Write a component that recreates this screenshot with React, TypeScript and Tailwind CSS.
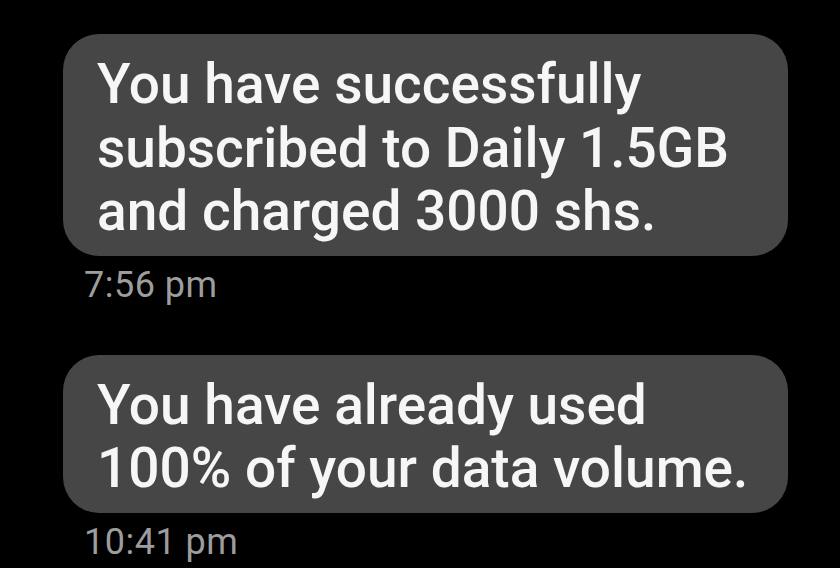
import React from "react";

type Message = {
  text: string[];
  time: string;
};

const messages: Message[] = [
  {
    text: [
      "You have successfully",
      "subscribed to Daily 1.5GB",
      "and charged 3000 shs.",
    ],
    time: "7:56 pm",
  },
  {
    text: ["You have already used", "100% of your data volume."],
    time: "10:41 pm",
  },
];

function Bubble({ message, first }: { message: Message; first: boolean }) {
  return (
    <div className={first ? "" : "mt-[50px]"}>
      <div className="w-[725px] rounded-[36px] bg-[#464646] pl-[34px] pr-[30px] pt-[19px] pb-[12px] text-[55px] leading-[63.5px] font-medium text-[#f6f6f6]">
        {message.text.map((line) => (
          <div key={line} className="whitespace-nowrap">
            {line}
          </div>
        ))}
      </div>
      <div className="mt-[9px] pl-[21px] text-[36px] leading-[40px] tracking-[0.5px] text-[#9d9d9d]">
        {message.time}
      </div>
    </div>
  );
}

export default function App() {
  return (
    <div
      className="h-[568px] w-[840px] overflow-hidden bg-black pl-[63px] pt-[34px]"
      style={{ fontFamily: "Roboto, 'Noto Sans', sans-serif" }}
    >
      {messages.map((m, i) => (
        <Bubble key={m.time} message={m} first={i === 0} />
      ))}
    </div>
  );
}
